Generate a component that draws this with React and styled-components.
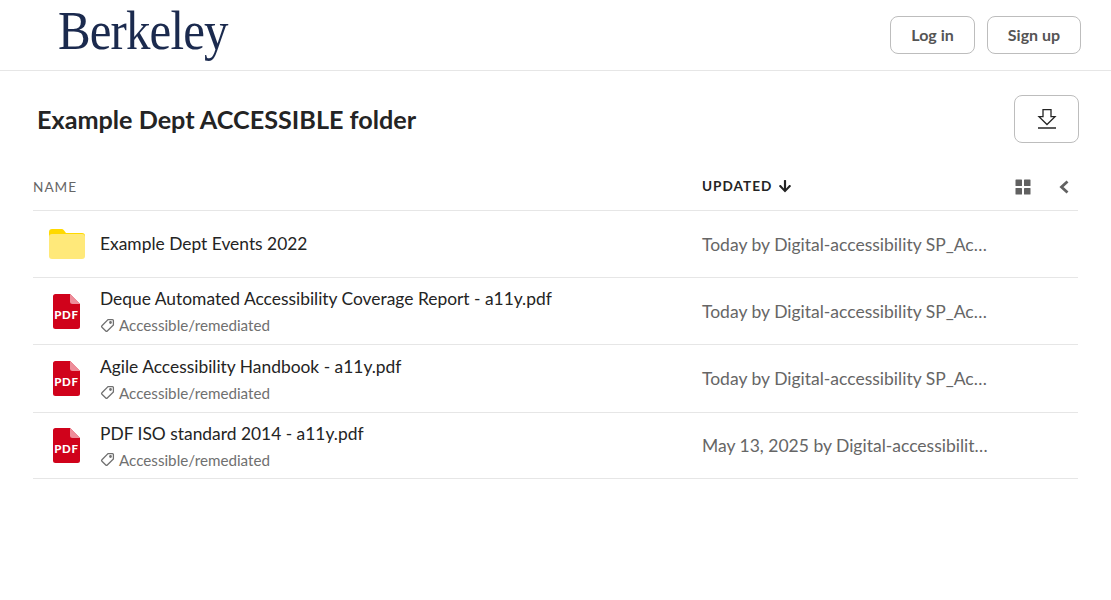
import React from 'react';
import styled, { createGlobalStyle } from 'styled-components';
import { FaArrowDown } from 'react-icons/fa';

const GlobalStyle = createGlobalStyle`
  html, body { margin: 0; padding: 0; background: #fff; }
  body { font-family: Lato, "Noto Sans", sans-serif; color: #242424; }
`;

const TopBar = styled.header`
  height: 70px;
  border-bottom: 1px solid #e6e6e6;
  display: flex;
  align-items: center;
  justify-content: space-between;
  padding: 0 30px 0 58px;
`;

const Logo = styled.div`
  font-family: "Liberation Serif", serif;
  font-size: 55px;
  line-height: 70px;
  letter-spacing: -1px;
  color: #1b2a4e;
  margin-top: -9px;
  transform: scaleX(0.89);
  transform-origin: left center;
`;

const AuthButtons = styled.div`
  display: flex;
  gap: 12px;
  margin-top: -1px;
`;

const AuthButton = styled.button`
  height: 38px;
  width: ${props => props.$width}px;
  padding: 0;
  background: #fff;
  border: 1px solid #bdbdbd;
  border-radius: 8px;
  font-family: Lato, sans-serif;
  font-weight: 700;
  font-size: 16px;
  color: #555;
`;

const TitleRow = styled.div`
  display: flex;
  align-items: center;
  justify-content: space-between;
  padding: 24px 32px 0 37px;
`;

const Title = styled.h1`
  margin: 0;
  font-size: 25.2px;
  font-weight: 700;
  color: #242424;
`;

const DownloadButton = styled.button`
  width: 65px;
  height: 48px;
  padding: 0;
  background: #fff;
  border: 1px solid #bdbdbd;
  border-radius: 8px;
  display: flex;
  align-items: center;
  justify-content: center;
`;

const Table = styled.div`
  margin: 20px 33px 0 33px;
`;

const HeadRow = styled.div`
  height: 47px;
  display: grid;
  grid-template-columns: 669px 1fr auto;
  align-items: center;
  border-bottom: 1px solid #e6e6e6;
`;

const HeadLabel = styled.div`
  font-size: 13.6px;
  letter-spacing: 1px;
  font-weight: ${props => (props.$active ? 700 : 400)};
  color: ${props => (props.$active ? '#242424' : '#666')};
  display: flex;
  align-items: center;
  gap: 6px;
  margin-top: ${props => (props.$active ? -2 : 0)}px;
`;

const HeadTools = styled.div`
  display: flex;
  align-items: center;
  gap: 27px;
  padding-right: 8px;
  color: #616161;
`;

const Row = styled.div`
  box-sizing: border-box;
  height: ${props => props.$height}px;
  display: grid;
  grid-template-columns: 67px 602px 1fr;
  align-items: center;
  border-bottom: 1px solid #e6e6e6;
`;

const IconCell = styled.div`
  display: flex;
  justify-content: center;
`;

const NameCell = styled.div`
  display: flex;
  flex-direction: column;
  gap: 6px;
`;

const Name = styled.div`
  font-size: 17.4px;
  line-height: 22px;
  color: #242424;
`;

const Tag = styled.div`
  display: flex;
  align-items: center;
  gap: 4px;
  font-size: 15.2px;
  line-height: 18px;
  color: #707070;
`;

const Updated = styled.div`
  font-size: 17.5px;
  color: #666;
  white-space: nowrap;
`;

const DownloadIcon = () => (
  <svg width="20" height="20" viewBox="0 0 20 20" fill="none" stroke="#242424" strokeWidth="1.3">
    <path d="M6 0.700h8v7h4L10 15.500 2 7.700h4z" />
    <path d="M1 19h18" strokeWidth="1.500" />
  </svg>
);

const GridIcon = () => (
  <svg width="16" height="16" viewBox="0 0 16 16" fill="#616161">
    <rect x="0.500" y="0.500" width="6.500" height="6.500" rx="0.600" />
    <rect x="9" y="0.500" width="6.500" height="6.500" rx="0.600" />
    <rect x="0.500" y="9" width="6.500" height="6.500" rx="0.600" />
    <rect x="9" y="9" width="6.500" height="6.500" rx="0.600" />
  </svg>
);

const ChevronIcon = () => (
  <svg width="12" height="14" viewBox="0 0 12 14" fill="none" stroke="#616161" strokeWidth="2.800">
    <path d="M9.500 1.500L3.500 7l6 5.500" />
  </svg>
);

const FolderIcon = () => (
  <svg width="36" height="30" viewBox="0 0 36 30">
    <path d="M0 3a3 3 0 0 1 3-3h9.500c1 0 1.800.4 2.400 1.200L17 4h16a3 3 0 0 1 3 3v6H0z" fill="#ffd900" />
    <rect x="0" y="5" width="36" height="25" rx="3" fill="#ffe97a" />
  </svg>
);

const PdfIcon = () => (
  <svg width="27" height="35" viewBox="0 0 27 35">
    <path d="M2.500 0H17l10 10v22.500a2.500 2.500 0 0 1-2.500 2.500h-22A2.500 2.500 0 0 1 0 32.500v-30A2.500 2.500 0 0 1 2.500 0z" fill="#d0021b" />
    <path d="M17 0l10 10h-7.500A2.500 2.500 0 0 1 17 7.500z" fill="#ee8d9a" />
    <text x="13.500" y="25" textAnchor="middle" fontFamily="Lato, sans-serif" fontWeight="900" fontSize="11.500" letterSpacing="0.700" fill="#fff">PDF</text>
  </svg>
);

const TagIcon = () => (
  <svg width="15" height="15" viewBox="0 0 14 14" fill="none" stroke="#707070" strokeWidth="1.200">
    <path d="M7.500 1.500h4.200a.8.8 0 0 1 .8.8v4.200L6.800 12.200a1 1 0 0 1-1.400 0L1.800 8.600a1 1 0 0 1 0-1.400z" />
    <circle cx="9.800" cy="4.200" r="0.700" />
  </svg>
);

const rows = [
  { id: 1, name: 'Example Dept Events 2022', updated: 'Today by Digital-accessibility SP_Ac…', height: 67, folder: true },
  { id: 2, name: 'Deque Automated Accessibility Coverage Report - a11y.pdf', updated: 'Today by Digital-accessibility SP_Ac…', height: 67 },
  { id: 3, name: 'Agile Accessibility Handbook - a11y.pdf', updated: 'Today by Digital-accessibility SP_Ac…', height: 68 },
  { id: 4, name: 'PDF ISO standard 2014 - a11y.pdf', updated: 'May 13, 2025 by Digital-accessibilit…', height: 66 },
];

export default function App() {
  return (
    <>
      <GlobalStyle />
      <TopBar>
        <Logo>Berkeley</Logo>
        <AuthButtons>
          <AuthButton $width={85}>Log in</AuthButton>
          <AuthButton $width={94}>Sign up</AuthButton>
        </AuthButtons>
      </TopBar>
      <TitleRow>
        <Title>Example Dept ACCESSIBLE folder</Title>
        <DownloadButton aria-label="Download"><DownloadIcon /></DownloadButton>
      </TitleRow>
      <Table>
        <HeadRow>
          <HeadLabel>NAME</HeadLabel>
          <HeadLabel $active>UPDATED <FaArrowDown size={14} /></HeadLabel>
          <HeadTools>
            <GridIcon />
            <ChevronIcon />
          </HeadTools>
        </HeadRow>
        {rows.map(row => (
          <Row key={row.id} $height={row.height}>
            <IconCell>{row.folder ? <FolderIcon /> : <PdfIcon />}</IconCell>
            <NameCell>
              <Name>{row.name}</Name>
              {!row.folder && <Tag><TagIcon />Accessible/remediated</Tag>}
            </NameCell>
            <Updated>{row.updated}</Updated>
          </Row>
        ))}
      </Table>
    </>
  );
}
